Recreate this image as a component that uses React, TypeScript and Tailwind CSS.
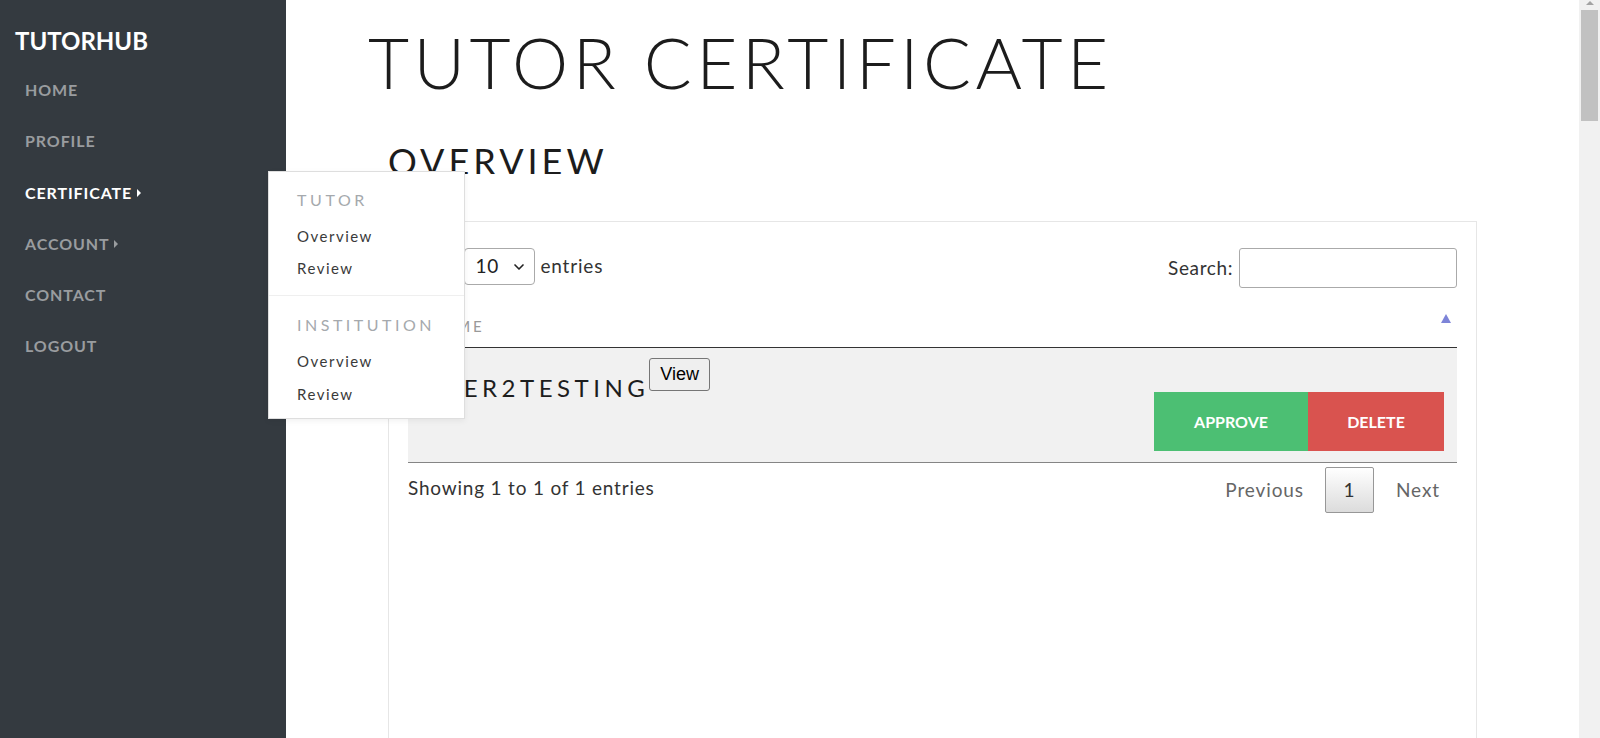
import { ChevronDown } from "lucide-react"

const navItems = [
	{ label: "HOME" },
	{ label: "PROFILE" },
	{ label: "CERTIFICATE", caret: true, active: true },
	{ label: "ACCOUNT", caret: true },
	{ label: "CONTACT" },
	{ label: "LOGOUT" },
]

const Caret = ({ active }: { active?: boolean }) => (
	<span
		className={`ml-[5px] inline-block h-0 w-0 border-y-[4px] border-l-[4px] border-y-transparent ${
			active ? "border-l-white" : "border-l-[#999c9f]"
		}`}
	/>
)

const Dropdown = () => (
	<div className="absolute left-[268px] top-[171px] z-10 flex h-[248px] w-[197px] flex-col border border-[#dedede] bg-white shadow-[0_2px_6px_rgba(0,0,0,0.06)]">
		<div className="flex flex-col px-[28px] pb-[19px] pt-[20px]">
			<span className="text-[16px] leading-none tracking-[3.6px] text-[#a5a9ad]">TUTOR</span>
			<a className="mt-[21px] text-[15px] leading-none tracking-[1.5px] text-[#3a3a3a]">Overview</a>
			<a className="mt-[17px] text-[15px] leading-none tracking-[1.5px] text-[#3a3a3a]">Review</a>
		</div>
		<div className="flex flex-col border-t border-[#efefef] px-[28px] pt-[21px]">
			<span className="text-[16px] leading-none tracking-[3.5px] text-[#a5a9ad]">INSTITUTION</span>
			<a className="mt-[21px] text-[15px] leading-none tracking-[1.5px] text-[#3a3a3a]">Overview</a>
			<a className="mt-[18px] text-[15px] leading-none tracking-[1.5px] text-[#3a3a3a]">Review</a>
		</div>
	</div>
)

const Sidebar = () => (
	<aside className="relative w-[286px] shrink-0 bg-[#343a40]">
		<div className="pl-[15px] pt-[29px] text-[24px] font-bold leading-none text-white">TUTORHUB</div>
		<nav className="mt-[29px] flex flex-col pl-[25px]">
			{navItems.map((item) => (
				<a
					key={item.label}
					className={`flex h-[51.3px] items-start text-[16px] font-bold leading-none tracking-[0.9px] ${
						item.active ? "text-white" : "text-[#999c9f]"
					}`}>
					<span className="flex items-center">
						{item.label}
						{item.caret && <Caret active={item.active} />}
					</span>
				</a>
			))}
		</nav>
		<Dropdown />
	</aside>
)

const Table = () => (
	<div className="h-[700px] border border-[#e6e6e6] px-[19px] pt-[26px]">
		<div className="flex items-start justify-between">
			<label className="flex items-center gap-[6px] text-[19px] tracking-[0.8px] text-[#333]">
				Show
				<span className="relative">
					<select className="h-[37px] w-[71px] appearance-none rounded-[4px] border border-[#aaa] bg-white pl-[11px] text-[19px] text-[#222]">
						<option>10</option>
					</select>
					<ChevronDown
						size={16}
						strokeWidth={2.5}
						className="pointer-events-none absolute right-[8px] top-[11px] text-[#222]"
					/>
				</span>
				entries
			</label>
			<label className="flex items-center gap-[6px] text-[19px] tracking-[0.6px] text-[#333]">
				Search:
				<input className="h-[40px] w-[218px] rounded-[3px] border border-[#aaa] bg-white" />
			</label>
		</div>

		<div className="mt-[29px] flex h-[31px] items-start justify-between border-b border-[#333] pl-[21px] pr-[6px]">
			<span className="pt-[2px] text-[15px] leading-none tracking-[2.8px] text-[#999]">NAME</span>
			<span className="mt-[-3px] h-0 w-0 border-x-[5px] border-b-[9px] border-x-transparent border-b-[#7d84d8]" />
		</div>

		<div className="flex flex-col border-b border-[#858585] bg-[#f1f1f1] pb-[11px] pl-[16px] pr-[13px] pt-[10px]">
			<div className="flex h-[34px] items-start">
				<h3 className="pt-[18px] text-[24px] leading-none tracking-[4.5px] text-[#1d1d1d]">
					USER2TESTING
				</h3>
				<button className="h-[33px] rounded-[3px] border border-[#767676] bg-[#efefef] px-[10px] font-['Liberation_Sans',Arial,sans-serif] text-[18px] text-black">
					View
				</button>
			</div>
			<div className="flex justify-end">
				<button className="h-[59px] w-[154px] bg-[#4cbf73] text-[16px] font-bold text-white">APPROVE</button>
				<button className="h-[59px] w-[136px] bg-[#d9534f] text-[16px] font-bold text-white">DELETE</button>
			</div>
		</div>

		<div className="flex items-start justify-between">
			<span className="mt-[15px] text-[19px] leading-none tracking-[0.8px] text-[#333]">
				Showing 1 to 1 of 1 entries
			</span>
			<div className="mt-[4px] flex items-center pr-[17px] text-[19px] tracking-[0.9px] text-[#666]">
				<a className="mr-[21px]">Previous</a>
				<a className="flex h-[46px] w-[49px] items-center justify-center rounded-[2px] border border-[#979797] bg-gradient-to-b from-white to-[#dcdcdc] text-[#333]">
					1
				</a>
				<a className="ml-[22px]">Next</a>
			</div>
		</div>
	</div>
)

const Scrollbar = () => (
	<div className="flex w-[21px] shrink-0 flex-col items-center bg-[#f1f1f1]">
		<span className="mt-[1px] h-0 w-0 border-x-[4px] border-b-[4px] border-x-transparent border-b-[#a3a3a3]" />
		<div className="mt-[5px] h-[111px] w-[17px] bg-[#c1c1c1]" />
	</div>
)

const App = () => {
	return (
		<div className="flex h-[738px] overflow-hidden bg-white font-['Lato',sans-serif]">
			<Sidebar />
			<main className="min-w-0 flex-1">
				<h1 className="ml-[82px] mt-[26px] text-[71px] font-light leading-none tracking-[4.4px] text-[#1c1c1c]">
					TUTOR CERTIFICATE
				</h1>
				<div className="mx-auto w-[1089px]">
					<div className="mt-[46px] h-[31px] overflow-hidden">
						<h2 className="text-[36px] leading-none tracking-[4px] text-[#1c1c1c]">OVERVIEW</h2>
					</div>
					<div className="mt-[47px]">
						<Table />
					</div>
				</div>
			</main>
			<Scrollbar />
		</div>
	)
}

export default App
